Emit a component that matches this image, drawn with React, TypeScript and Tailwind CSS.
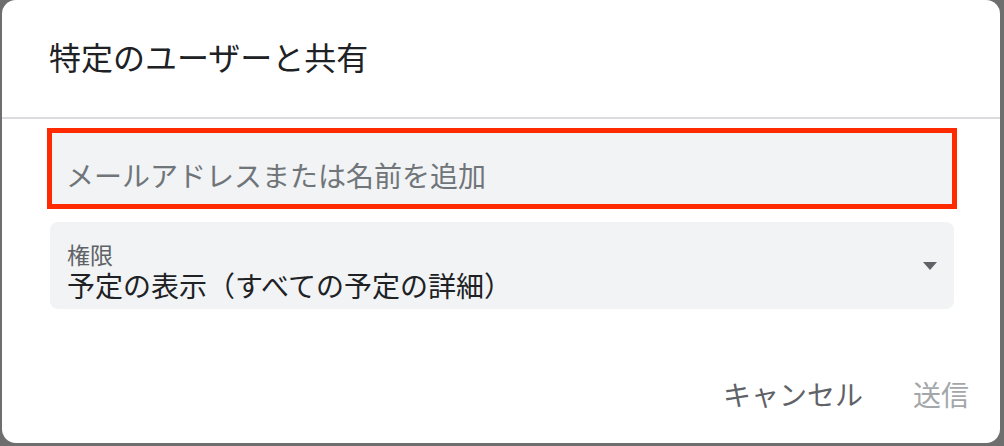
export default function App() {
  return (
    <div className="flex h-[446px] w-[1004px] bg-[#6e6e6e] pb-[3px] pl-[2px] pr-[4px] font-['Noto_Sans_CJK_JP',sans-serif]">
      <div className="flex flex-1 flex-col rounded-[14px] bg-white">
        <div className="flex h-[117px] items-center pb-[5px] pl-[47px] text-[32px] leading-[40px] text-[#202124]">
          特定のユーザーと共有
        </div>
        <div className="h-[2px] bg-[#dadce0]" />

        <div className="ml-[45px] mt-[9px] flex h-[81px] w-[910px] items-center border-[5px] border-[#ff2a00] bg-[#f1f3f4] pl-[14px] pt-[13px] text-[28px] leading-[34px] text-[#70757a]">
          メールアドレスまたは名前を追加
        </div>

        <div className="ml-[48px] mt-[13px] flex h-[87px] w-[904px] items-start rounded-lg bg-[#f1f3f4] pl-[17px] pr-[17px] pt-[19px]">
          <div className="flex min-w-0 flex-1 flex-col gap-[2px]">
            <span className="text-[23px] leading-[26px] text-[#5f6368]">権限</span>
            <span className="text-[28px] leading-[32px] text-[#202124]">
              予定の表示（すべての予定の詳細）
            </span>
          </div>
          <svg width="14" height="8" viewBox="0 0 14 8" className="mt-[21px]">
            <polygon points="0,0 14,0 7,8" fill="#5f6368" />
          </svg>
        </div>

        <div className="mt-[67px] flex justify-end gap-[50px] pr-[31px] text-[28px] leading-[36px]">
          <button type="button" className="text-[#5f6368]">
            キャンセル
          </button>
          <button type="button" className="text-[#a4a7aa]">
            送信
          </button>
        </div>
      </div>
    </div>
  )
}
